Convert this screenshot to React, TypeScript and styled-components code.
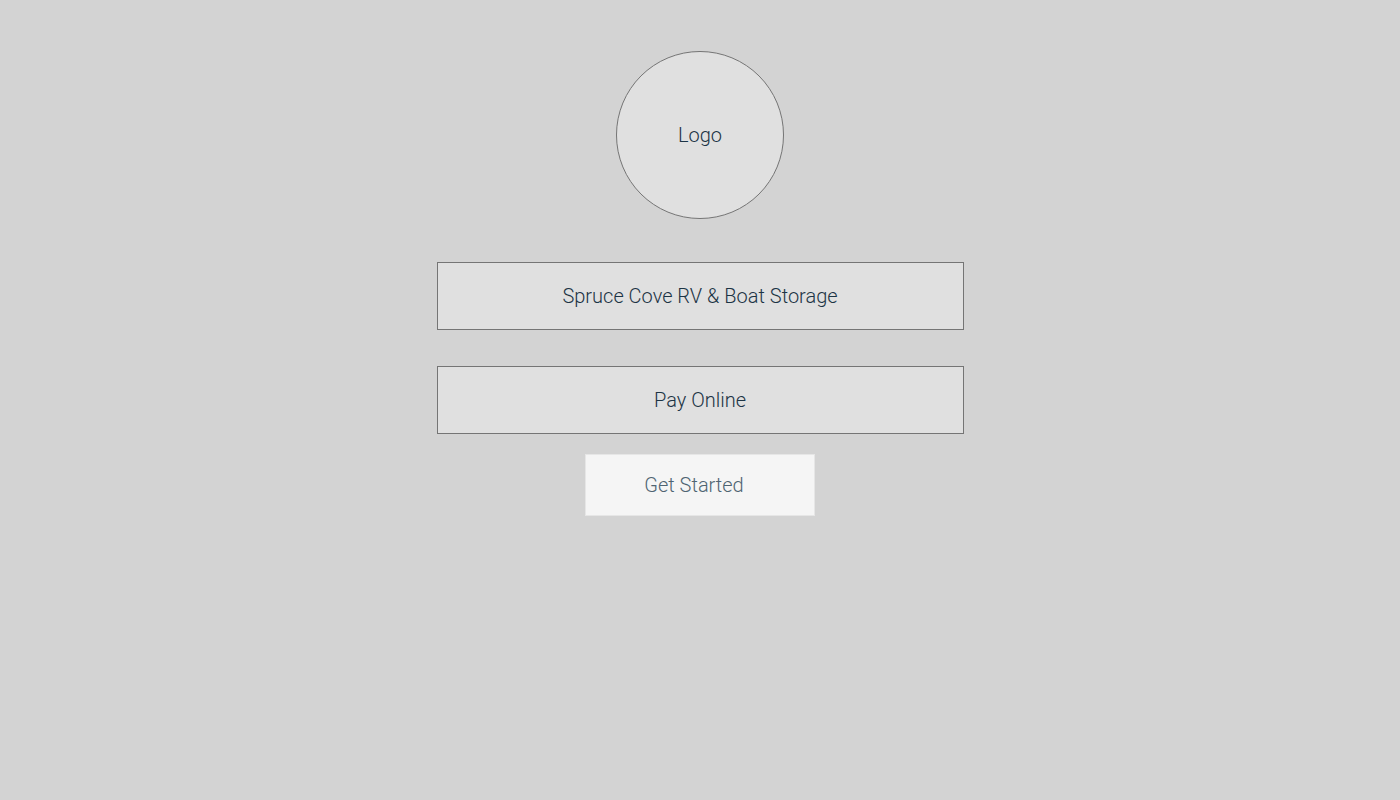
import * as React from "react"
import styled, { createGlobalStyle } from "styled-components"

const GlobalStyle = createGlobalStyle`
  html, body {
    margin: 0;
    padding: 0;
    background: #d3d3d3;
    font-family: Roboto, "Noto Sans", sans-serif;
  }
`

export default function App() {
  return (
    <>
      <GlobalStyle />
      <Page>
        <LogoCircle>Logo</LogoCircle>
        <InfoBox $gap={43}>Spruce Cove RV &amp; Boat Storage</InfoBox>
        <InfoBox $gap={36}>Pay Online</InfoBox>
        <StartButton>Get Started</StartButton>
      </Page>
    </>
  )
}

/* ---------------- styles ---------------- */

const Page = styled.main`
  min-height: 800px;
  display: flex;
  flex-direction: column;
  align-items: center;
  padding-top: 51px;
  box-sizing: border-box;
`

const LogoCircle = styled.div`
  width: 166px;
  height: 166px;
  border-radius: 50%;
  border: 1px solid #757575;
  background: #e0e0e0;
  display: grid;
  place-items: center;
  font-size: 20px;
  font-weight: 300;
  color: #1c3445;
`

const InfoBox = styled.div<{ $gap: number }>`
  margin-top: ${({ $gap }) => $gap}px;
  width: 525px;
  height: 66px;
  border: 1px solid #757575;
  background: #e0e0e0;
  display: flex;
  align-items: center;
  justify-content: center;
  font-size: 20px;
  font-weight: 300;
  color: #1c3445;
`

const StartButton = styled.button`
  margin-top: 20px;
  width: 230px;
  height: 62px;
  padding: 0 12px 0 0;
  border: 1px solid #e6e6e6;
  background: #f5f5f5;
  font-family: Roboto, "Noto Sans", sans-serif;
  font-size: 20px;
  font-weight: 300;
  color: #4f6472;
  cursor: pointer;
`
